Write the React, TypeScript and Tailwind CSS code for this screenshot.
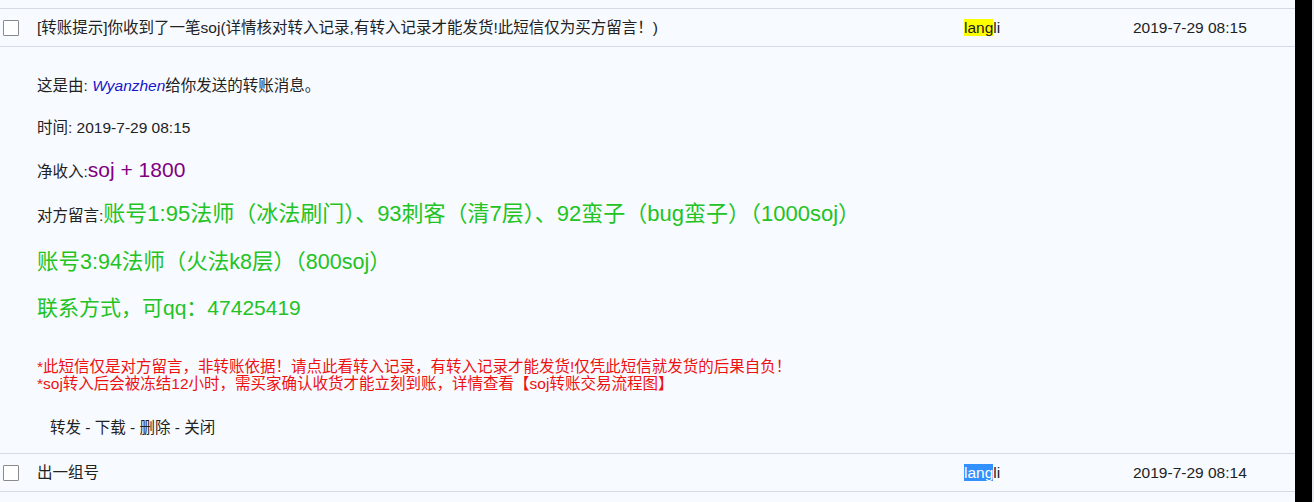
import React from "react";

const FONT = { fontFamily: '"Liberation Sans", "Noto Sans CJK SC", sans-serif' };

function Checkbox() {
  return <span className="block w-[16px] h-[16px] border border-[#8a8a8a] bg-white rounded-[1px]" />;
}

function MessageRow({
  title,
  date,
  hl,
}: {
  title: string;
  date: string;
  hl: "yellow" | "select";
}) {
  return (
    <div className="flex items-center h-[38px] border-b border-[#d5dbe4] text-[15.5px] text-[#222]">
      <div className="w-[37px] pl-[3px] flex items-center">
        <Checkbox />
      </div>
      <div className="w-[927px] whitespace-nowrap">{title}</div>
      <div className="w-[169px]">
        {hl === "yellow" ? (
          <span className="bg-[#ffff00]">lang</span>
        ) : (
          <span className="bg-[#3390ff] text-white">lang</span>
        )}
        li
      </div>
      <div>{date}</div>
    </div>
  );
}

export default function App() {
  return (
    <div className="flex w-[1314px] h-[502px] bg-[#f7faff] overflow-hidden" style={FONT}>
      <main className="w-[1295px] pt-[8px]">
        <div className="border-t border-[#d5dbe4]">
          <MessageRow
            title="[转账提示]你收到了一笔soj(详情核对转入记录,有转入记录才能发货!此短信仅为买方留言！)"
            date="2019-7-29 08:15"
            hl="yellow"
          />

          {/* Expanded message body */}
          <div className="flex flex-col h-[407px] pt-[29px] border-b border-[#d5dbe4] pl-[37px] text-[15.5px] text-[#222]">
            <p className="h-[20px] leading-[20px]">
              这是由: <span className="italic text-[#1414cc]">Wyanzhen</span>给你发送的转账消息。
            </p>
            <p className="h-[20px] leading-[20px] mt-[22px]">时间: 2019-7-29 08:15</p>
            <p className="h-[28px] leading-[28px] mt-[18px]">
              净收入:<span className="text-[21px] text-[#800080]">soj + 1800</span>
            </p>
            <p className="h-[28px] leading-[28px] mt-[16px] whitespace-nowrap">
              对方留言:
              <span className="text-[22px] text-[#22c322]">
                账号1:95法师（冰法刷门）、93刺客（清7层）、92蛮子（bug蛮子）（1000soj）
              </span>
            </p>
            <p className="h-[28px] leading-[28px] mt-[20px] text-[21.5px] text-[#22c322]">
              账号3:94法师（火法k8层）（800soj）
            </p>
            <p className="h-[28px] leading-[28px] mt-[18px] text-[21px] text-[#22c322]">
              联系方式，可qq：47425419
            </p>
            <div className="mt-[36px] leading-[17px] text-[#ee1111] whitespace-nowrap">
              <p>*此短信仅是对方留言，非转账依据！请点此看转入记录，有转入记录才能发货!仅凭此短信就发货的后果自负！</p>
              <p>*soj转入后会被冻结12小时，需买家确认收货才能立刻到账，详情查看【soj转账交易流程图】</p>
            </div>
            <p className="h-[20px] leading-[20px] mt-[26px] pl-[13px]">转发 - 下载 - 删除 - 关闭</p>
          </div>

          <MessageRow title="出一组号" date="2019-7-29 08:14" hl="select" />
        </div>
      </main>
      <div className="w-[17px] bg-black" />
      <div className="w-[2px] bg-[#e8ebf0]" />
    </div>
  );
}
